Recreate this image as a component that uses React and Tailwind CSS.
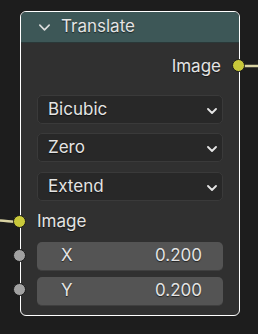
import React from 'react'

function Chevron({ className, width = 1.4 }) {
  return (
    <svg className={className} viewBox="0 0 10 6" fill="none" stroke="currentColor" strokeWidth={width} strokeLinecap="round" strokeLinejoin="round">
      <path d="M1 1 L5 5 L9 1" />
    </svg>
  )
}

function Dropdown({ label, className = '' }) {
  return (
    <div className={`flex items-center justify-between h-[29px] rounded-[5px] bg-[#282828] border border-[#3a3a3a] pl-[10px] pr-[5px] ${className}`}>
      <span className="text-[17px] text-[#e4e4e4]">{label}</span>
      <Chevron className="w-[10px] h-[6px] text-[#e6e6e6] mt-[2px]" width={1.8} />
    </div>
  )
}

function NumField({ label, value, className = '' }) {
  return (
    <div className={`flex items-center justify-between h-[29px] rounded-[5px] bg-[#545454] border-b border-[#3f3f3f] pl-[24px] pr-[21px] ${className}`}>
      <span className="text-[17px] text-[#e4e4e4]">{label}</span>
      <span className="text-[17px] text-[#e4e4e4]">{value}</span>
    </div>
  )
}

function Socket({ color, top, left }) {
  return (
    <div
      className={`absolute w-[13px] h-[13px] rounded-full border border-[#1a1a1a] ${color} ${top} ${left}`}
    />
  )
}

export default function App() {
  return (
    <div
      className="relative w-[258px] h-[334px] bg-[#1d1d1d] overflow-hidden pt-[11px] pl-[20px]"
      style={{ fontFamily: 'Inter, "Noto Sans", sans-serif' }}
    >
      {/* links */}
      <svg className="absolute left-0 top-0 w-[258px] h-[334px]" viewBox="0 0 258 334">
        <path d="M240 66 L258 66" stroke="#d9d3a3" strokeWidth="2.5" fill="none" />
        <path d="M0 220.5 C8 221 12 222 20 222" stroke="#d9d3a3" strokeWidth="2.5" fill="none" />
      </svg>

      <div className="relative w-[220px] h-[305px] rounded-[6px] border-[1.5px] border-white bg-[#303030] [text-shadow:0_1px_1px_rgba(0,0,0,0.6)]">
        <div className="flex items-center h-[31px] rounded-t-[5px] bg-[#3d5757] border-b border-[#2a3838] pl-[17px]">
          <Chevron className="w-[13px] h-[7px] text-[#dcdcdc] mr-[10px]" />
          <span className="text-[17px] text-[#e4e4e4]">Translate</span>
        </div>

        <div className="flex flex-col px-[16px]">
          <div className="flex items-center justify-end h-[24px] mt-[12px] pr-[2px]">
            <span className="text-[17px] text-[#e4e4e4]">Image</span>
          </div>
          <Dropdown label="Bicubic" className="mt-[16px]" />
          <Dropdown label="Zero" className="mt-[9px]" />
          <Dropdown label="Extend" className="mt-[10px]" />
          <div className="flex items-center h-[24px] mt-[9px]">
            <span className="text-[17px] text-[#e4e4e4]">Image</span>
          </div>
          <NumField label="X" value="0.200" className="mt-[8px]" />
          <NumField label="Y" value="0.200" className="mt-[6px]" />
        </div>

        <Socket color="bg-[#c8c83a]" top="top-[47px]" left="left-[211px]" />
        <Socket color="bg-[#c8c83a]" top="top-[203px]" left="left-[-8px]" />
        <Socket color="bg-[#a1a1a1]" top="top-[237px]" left="left-[-8px]" />
        <Socket color="bg-[#a1a1a1]" top="top-[271px]" left="left-[-8px]" />
      </div>
    </div>
  )
}
